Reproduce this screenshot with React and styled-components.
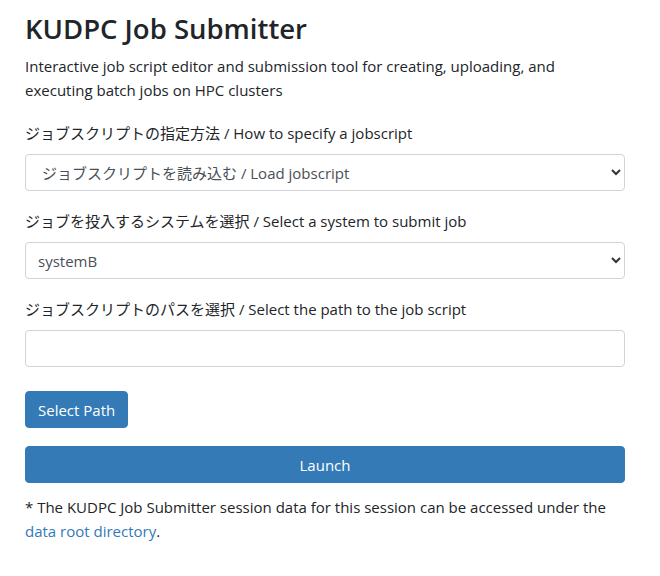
import React from "react";
import styled, { createGlobalStyle } from "styled-components";

const GlobalStyle = createGlobalStyle`
  body {
    margin: 0;
    background: #fff;
    color: #212529;
    font-family: "Open Sans", "Noto Sans CJK JP", sans-serif;
    font-size: 15px;
    line-height: 24px;
  }
`;

const Page = styled.div`
  width: 600px;
  padding: 12px 25px 24px;
`;

const Title = styled.h1`
  margin: 0 0 8px;
  font-size: 27.5px;
  font-weight: 600;
  line-height: 34px;
  color: #212529;
`;

const Lead = styled.p`
  margin: 0 0 19px;
`;

const Group = styled.div`
  margin-bottom: 18px;
`;

const Label = styled.label`
  display: block;
  margin-bottom: 9px;
`;

const SelectWrap = styled.div`
  position: relative;
`;

const Select = styled.select`
  display: block;
  width: 100%;
  height: 37px;
  padding: 0 32px 0 ${p => p.$indent || 12}px;
  border: 1px solid #ced4da;
  border-radius: 4px;
  background: #fff;
  color: #495057;
  font: inherit;
  appearance: none;
  -webkit-appearance: none;
`;

const Chevron = styled.svg`
  position: absolute;
  right: 4px;
  top: 14px;
  pointer-events: none;
`;

const Input = styled.input`
  display: block;
  box-sizing: border-box;
  width: 100%;
  height: 37px;
  padding: 0 12px;
  border: 1px solid #ced4da;
  border-radius: 4px;
  font: inherit;
`;

const Button = styled.button`
  display: block;
  box-sizing: border-box;
  width: ${p => (p.$block ? "100%" : "auto")};
  height: 37px;
  padding: 0 12px;
  margin-top: ${p => p.$top || 0}px;
  border: 1px solid #337ab7;
  border-radius: 4px;
  background: #337ab7;
  color: #fff;
  font: inherit;
`;

const Note = styled.p`
  margin: 12px 0 0;
`;

const Link = styled.a`
  color: #337ab7;
  text-decoration: none;
`;

const Caret = () => (
  <Chevron width="10" height="8" viewBox="0 0 10 8">
    <path d="M1 2 L5 6 L9 2" fill="none" stroke="#333" strokeWidth="2" />
  </Chevron>
);

const App = () => (
  <>
    <GlobalStyle />
    <Page>
      <Title>KUDPC Job Submitter</Title>
      <Lead>
        Interactive job script editor and submission tool for creating, uploading, and
        executing batch jobs on HPC clusters
      </Lead>
      <Group>
        <Label>ジョブスクリプトの指定方法 / How to specify a jobscript</Label>
        <SelectWrap>
          <Select $indent={16} defaultValue="load">
            <option value="load">ジョブスクリプトを読み込む / Load jobscript</option>
          </Select>
          <Caret />
        </SelectWrap>
      </Group>
      <Group>
        <Label>ジョブを投入するシステムを選択 / Select a system to submit job</Label>
        <SelectWrap>
          <Select defaultValue="systemB">
            <option value="systemB">systemB</option>
          </Select>
          <Caret />
        </SelectWrap>
      </Group>
      <Group>
        <Label>ジョブスクリプトのパスを選択 / Select the path to the job script</Label>
        <Input type="text" />
      </Group>
      <Button $top={24}>Select Path</Button>
      <Button $block $top={18}>Launch</Button>
      <Note>
        * The KUDPC Job Submitter session data for this session can be accessed under the{" "}
        <Link href="#">data root directory</Link>.
      </Note>
    </Page>
  </>
);

export default App;
